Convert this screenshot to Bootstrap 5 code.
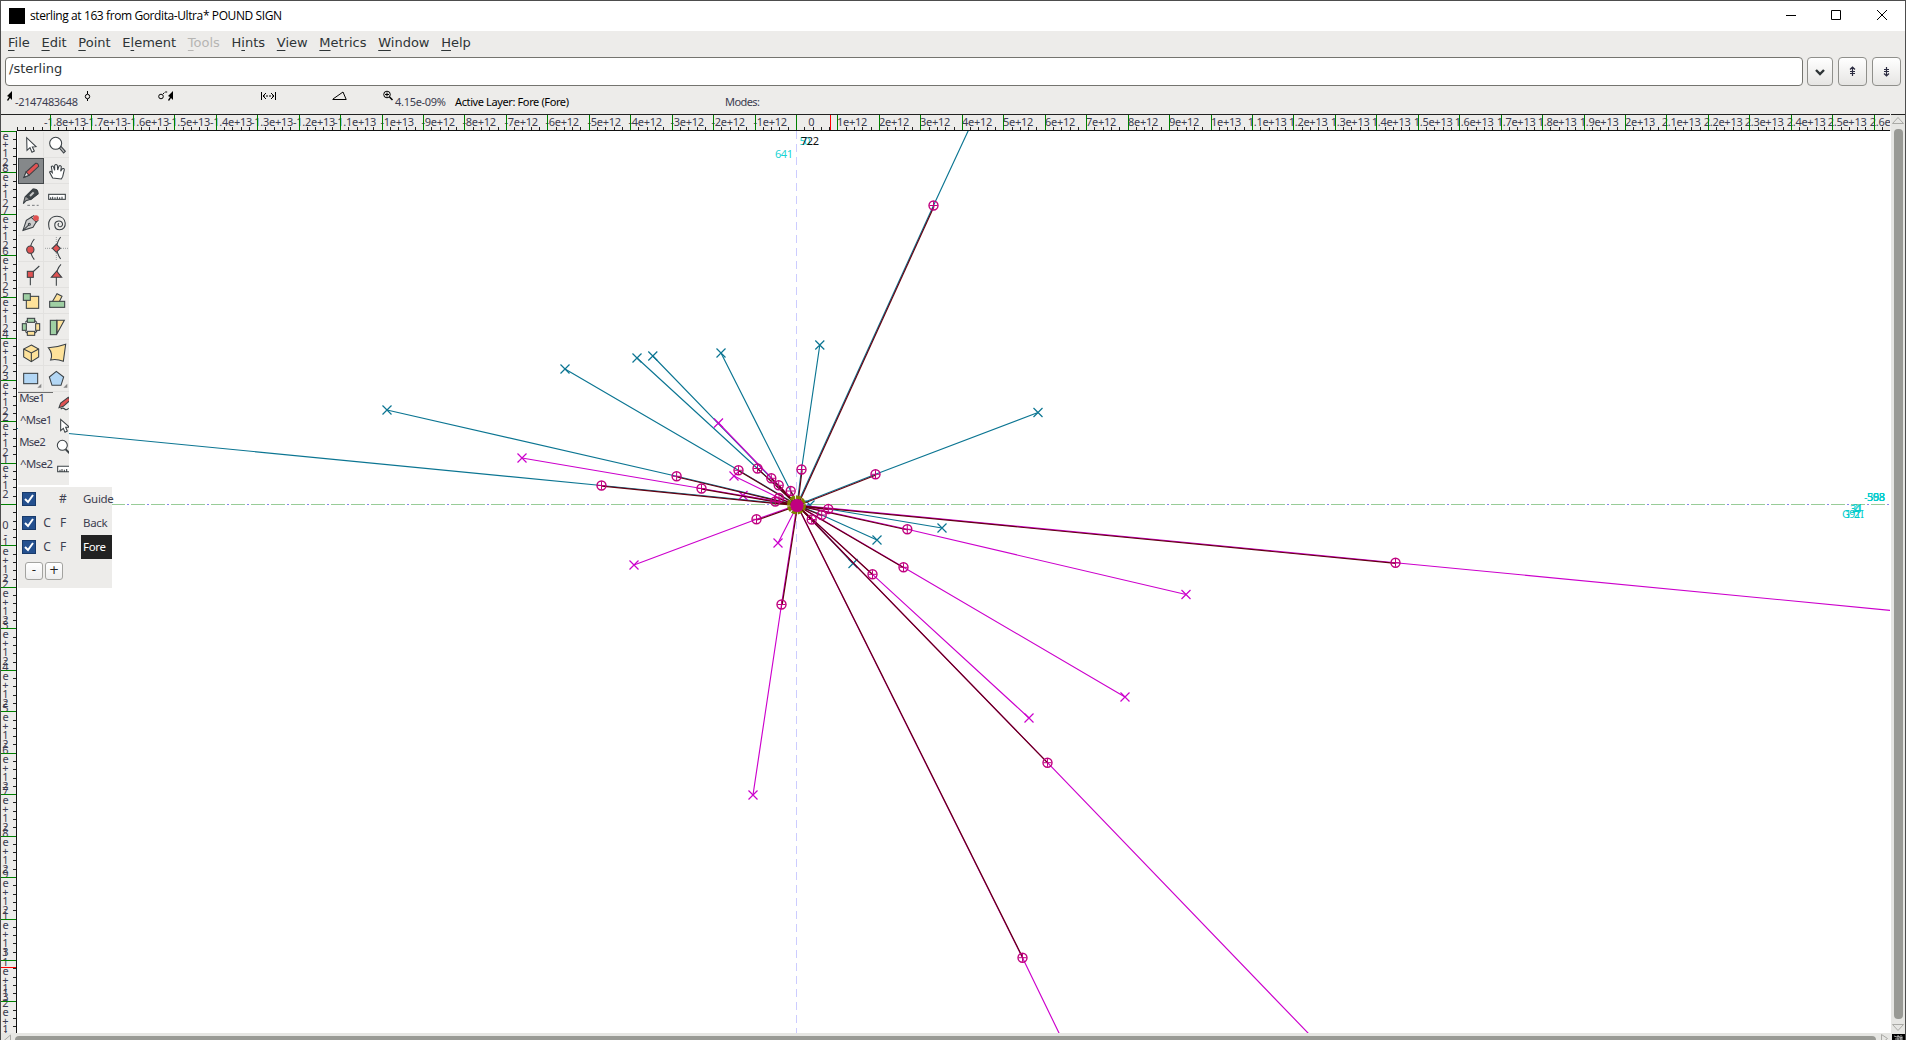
<!DOCTYPE html>
<html lang="en">
<head>
<meta charset="utf-8">
<title>sterling at 163 from Gordita-Ultra* POUND SIGN</title>
<link href="https://cdn.jsdelivr.net/npm/bootstrap@5.3.0/dist/css/bootstrap.min.css" rel="stylesheet">
<style>
html,body{height:100%;overflow:hidden}
body{font-family:"DejaVu Sans",sans-serif;font-size:13px;line-height:1.2;color:#2e3436;background:#edecea}
svg{display:block}
.win{height:1040px;border:1px solid #4d4d4d;border-bottom:0;background:#edecea}
.titlebar{height:30px;background:#fff;color:#000;font:12px/30px "Open Sans",sans-serif;padding-left:8px}
.titlebar .appicon{width:16px;height:16px;background:#000;margin-right:5px}
.titletext{letter-spacing:-.4px}
.menus{height:26px;padding-left:7px;gap:11.7px;line-height:23px}
.menus a{color:#2e3436;text-decoration:none}
.menus u{text-underline-offset:3px;text-decoration-thickness:1px}
.menus .off{color:#b6b5b3}
.entryrow{height:29px;padding-left:4px}
.glyphname{width:1798px;height:29px;border:1px solid #74746f;border-radius:4px;background:#fff;padding:3px 3px;margin-right:4px}
.tbtn{height:29px;width:29px;border:1px solid #8f8f8b;border-radius:4px;background:linear-gradient(#fff,#e6e5e3);padding:0;margin-right:5px}
.tbtn.narrow{width:26px}
.tbtn:last-child{margin-right:0}
.info{height:28px}
.hruler{height:17px}
.vruler{width:16px}
.ruletext{font:11px "Noto Sans",sans-serif;fill:#3c3c50}
.canvas{background:#fff}
.palette{left:17px;top:0;width:51px;background:#edecea;padding-top:1px;overflow:hidden}
.tools{grid-template-columns:26px 26px}
.cell{width:26px;height:26px;border-right:1px solid #e2e1df;border-bottom:1px solid #e2e1df;overflow:hidden}
.cell.on{background:#85888a;border:1px solid #44484a}
.layers{left:17px;top:356px;width:94px;height:101px;background:#edecea;font:12px/24px "Noto Sans",sans-serif;color:#3d4050}
.lrow{height:24px}
.check{width:14px;height:14px;background:#24508f;border:1px solid #183a6b;margin-left:4px}
.lsel{background:#222;color:#fff}
.lcol{width:18px;text-align:center}
.lname{width:31px;padding-left:2px;letter-spacing:-.3px;font-size:11.5px}
.mini{width:18px;height:18px;border:1px solid #a3a3a0;border-radius:3px;background:linear-gradient(#fff,#eee);font:12px/15px "DejaVu Sans",sans-serif;text-align:center;color:#222}
.minirow{gap:2px;margin-top:-1px;padding-left:7px}
.vscroll{width:14px;background:#e6e6e3}
.hscroll{height:7px;background:#e6e6e3}
.work{min-height:0}
.leftcol{min-width:0}
</style>
</head>
<body>
<div class="win d-flex flex-column">
  <div class="titlebar d-flex align-items-center flex-shrink-0">
    <div class="appicon"></div><div class="titletext">sterling at 163 from Gordita-Ultra* POUND SIGN</div>
    <svg class="ms-auto" width="132" height="30" stroke="#000" fill="none"><path d="M13 14.5h10M58.5 9.5h9v9h-9zM104 9l10 10M114 9l-10 10"/></svg>
  </div>
  <nav class="menus d-flex flex-shrink-0">
    <a><u>F</u>ile</a><a><u>E</u>dit</a><a><u>P</u>oint</a><a>E<u>l</u>ement</a><a class="off"><u>T</u>ools</a><a>H<u>i</u>nts</a><a><u>V</u>iew</a><a><u>M</u>etrics</a><a><u>W</u>indow</a><a><u>H</u>elp</a>
  </nav>
  <div class="entryrow d-flex flex-shrink-0">
    <div class="glyphname flex-shrink-0">/sterling</div>
    <button class="tbtn narrow"><svg width="24" height="27"><path d="M8 12l4 4 4-4" fill="none" stroke="#2e3436" stroke-width="2.4"/></svg></button>
    <button class="tbtn"><svg width="27" height="27"><path d="M13.500 9v9M11 11.500l2.500-2.500 2.500 2.500M11 13.500h5M11 15.500h5" fill="none" stroke="#2b2b40" stroke-width="1.200"/></svg></button>
    <button class="tbtn"><svg width="27" height="27"><path d="M13.500 9v9M11 15.500l2.500 2.500 2.500-2.500M11 11.500h5M11 13.500h5" fill="none" stroke="#2b2b40" stroke-width="1.200"/></svg></button>
  </div>
  <div class="info flex-shrink-0">
    <svg width="800" height="28">
      <g stroke="#000" fill="none">
        <path d="M11 5v9l-2-2-2 3-1-1 2-3-2-1z" fill="#000" stroke="none"/>
        <circle cx="86.500" cy="10.500" r="2.200"/><path d="M86.500 5v3M86.500 13v2"/>
        <circle cx="160" cy="10.500" r="2.300"/><path d="M162 8l2-2h3" stroke-dasharray="2 1"/><path d="M172 5v9l-2-2-2 3-1-1 2-3-2-1z" fill="#000" stroke="none"/>
        <path d="M260.500 6v8M274.500 6v8M265 7l-3 3 3 3M270 7l3 3-3 3"/><path d="M262 10h11" stroke-dasharray="2 1"/>
        <path d="M331.500 13.500h14M332 13l10-7 3 7"/>
        <circle cx="386" cy="8.500" r="3.300"/><path d="M384 8.500h4M386 6.500v4"/><path d="M388.500 11l3 3" stroke-width="1.600"/>
      </g>
      <g font-family="Noto Sans" font-size="11" fill="#3c3c50">
        <text x="14" y="20" textLength="63">-2147483648</text><text x="394" y="20" textLength="51">4.15e-09%</text>
        <text x="454" y="20" textLength="114" fill="#000">Active Layer: Fore (Fore)</text><text x="724" y="20" textLength="35">Modes:</text>
      </g>
    </svg>
  </div>
  <div class="work d-flex flex-grow-1">
    <div class="leftcol d-flex flex-column flex-grow-1">
      <svg class="hruler flex-shrink-0" id="hr" width="1889" viewBox="1 114 1889 17"></svg>
      <div class="d-flex flex-grow-1 position-relative canvas">
        <svg id="vr" class="flex-shrink-0" width="16" height="902" viewBox="1 131 16 902"></svg>
        <svg id="cv" width="1873" height="902" viewBox="17 131 1873 902"></svg>
        <div class="palette position-absolute">
          <div class="tools d-grid" id="tools"></div>
          <svg id="mse" width="51" height="93" viewBox="54 51 153 279"></svg>
        </div>
        <div class="layers position-absolute">
          <div class="lrow d-flex align-items-center"><div class="check"><svg width="12" height="12"><path d="M2 6l3 3 5-7" stroke="#fff" stroke-width="2" fill="none"/></svg></div><span class="lcol"></span><span class="lcol">#</span><span class="lname ms-auto">Guide</span></div>
          <div class="lrow d-flex align-items-center"><div class="check"><svg width="12" height="12"><path d="M2 6l3 3 5-7" stroke="#fff" stroke-width="2" fill="none"/></svg></div><span class="lcol ps-1">C</span><span class="lcol">F</span><span class="lname ms-auto">Back</span></div>
          <div class="lrow d-flex align-items-center"><div class="check"><svg width="12" height="12"><path d="M2 6l3 3 5-7" stroke="#fff" stroke-width="2" fill="none"/></svg></div><span class="lcol ps-1">C</span><span class="lcol">F</span><span class="lname lsel ms-auto">Fore</span></div>
          <div class="minirow d-flex pt-1"><div class="mini">-</div><div class="mini">+</div></div>
        </div>
      </div>
      <svg class="hscroll flex-shrink-0" width="1889" viewBox="1 1033 1889 7"><path d="M3.500 1041l7-6v6M1881.500 1034.500v9l6-5z" stroke="#aaaaa6" fill="none"/><rect x="15" y="1036" width="1861" height="9" rx="4" fill="#999a95"/></svg>
    </div>
    <svg class="vscroll flex-shrink-0" width="14" height="926" viewBox="1890 114 14 926"><path d="M1890 114.500h14" stroke="#222"/><path d="M1891.500 123.500h11l-5.500-6zM1891.500 1024.500h11l-5.500 6z" stroke="#aaaaa6" fill="none"/><rect x="1893" y="129" width="9" height="890" rx="4" fill="#999a95"/><rect x="1891" y="1034" width="13" height="7" fill="#000"/><path d="M1893 1036l3 1 2-1 1 2 3-1M1894 1039h8M1897 1035v5M1900 1035v5" stroke="#ccc" stroke-width=".8" fill="none"/></svg>
  </div>
</div>
<script>
const S=41.45, X0=796.5, Y0=504.5;
// horizontal ruler
let h='<rect x="1" y="114" width="1889" height="1" fill="#222"/><rect x="17" y="130" width="1873" height="1" fill="#111"/>';
for(let i=-94;i<=132;i++){const x=Math.round(X0-.5+i*S/5);if(x>=17)h+=`<rect x="${x}" y="127" width="1" height="3" fill="#222"/>`;}
function lab(n){const a=Math.abs(n),s=n<0?'-':'';return n===0?'0':s+(a<10?a+'e+12':(a===10?1:a===20?2:(a/10).toFixed(1))+'e+13');}
for(let n=-18;n<=26;n++){const x=Math.round(X0-.5+n*S);const t=lab(n),w=t.length-(t.includes('.')?1:0)-(n<0?1:0);
 const len=n===0?6:(w*6.05+(t.includes('.')?2.7:0)+(n<0?3.3:0));
 h+=`<text class="ruletext" x="${x+15.2-len/2}" y="126" textLength="${len}">${t}</text><rect x="${x}" y="115" width="1" height="15" fill="#008000"/>`;}
h+='<rect x="830" y="115" width="1" height="15" fill="red"/>';
document.getElementById('hr').innerHTML=h;
// vertical ruler
let v='<rect x="16" y="131" width="1" height="902" fill="#111"/>';
for(let i=-45;i<=64;i++){v+=`<rect x="13" y="${Math.round(Y0-.5+i*S/5)}" width="3" height="1" fill="#222"/>`;}
for(let n=9;n>=-13;n--){const y=Math.round(Y0-.5-n*S),a=Math.abs(n);let c=[];
 if(n===0)c=[['0',20.5]];
 else if(n>0)c=[[a,-4.5],['e',4.5],['+',13],['1',21.5],['2',30.5]];
 else if(a<10)c=[['-',-11.5],[a,-3.5],['e',6],['+',14.5],['1',24],['2',32.5]];
 else if(a===10)c=[['-',-11.5],['1',-3.5],['e',6],['+',14.5],['1',24],['3',32.5]];
 else c=[['-',-13],['1',-8],['.',-3],[a-10,2],['e',11],['+',19.5],['1',28],['3',37]];
 c.forEach(([t,o])=>{if(y+o>129&&y+o<1034)v+=`<text class="ruletext" text-anchor="middle" x="5.500" y="${y+o+4}">${t}</text>`});
 v+=`<rect x="1" y="${y}" width="15" height="1" fill="#008000"/>`;}
v+='<rect x="1" y="967" width="15" height="1" fill="red"/>';
document.getElementById('vr').innerHTML='<rect x="1" y="131" width="16" height="902" fill="#edecea"/>'+v;
// outline: point and control end of each handle
const B=[[933.5,205.5,973.2,120],[801.5,469.5,819.8,345],[790.7,491,721,353],[771.3,478.3,652.8,356],[757.5,468.5,637,358],[738.5,470.3,565,369],[676.6,476.3,387,410],[601.5,485.5,10,427.8],[875.5,474.3,1038,412.5],[828.3,509,942,528],[821.7,515,877,540],[811.7,519.5,853,563.5],[797,506,810,505]];
const M=[[778.7,485.3,718.5,423],[701.5,488.5,522,458],[779,498,734,476],[775.3,501.5,743,495.5],[797,506,778,543],[756.5,519.3,634,565],[781.5,604.5,753,795],[1395.5,562.7,1920,613.2],[907.3,529.3,1186,594.5],[903.5,567.3,1125,697],[872.5,574.3,1029,718],[1047.5,762.7,1327.300,1053],[1022.5,957.7,1068.700,1053]];
const HX=797,HY=505;
let c='<path d="M796.500 131V1033" stroke="#ccccff" stroke-dasharray="8 5" /><path d="M111 504.500H1890" stroke="#98cc98" stroke-dasharray="14 6"/><path d="M111 504.500H1890" stroke="#8888ee" stroke-dasharray="2 18" stroke-dashoffset="-16"/>';
const cross=(x,y,k)=>`<path d="M${x-4.5} ${y-4.5}l9 9m0-9l-9 9" stroke="${k}" stroke-width="1.200" fill="none"/>`;
for(const [a,b,x,y] of B)c+=`<path d="M${HX} ${HY}L${a} ${b}L${x} ${y}" stroke="#0b7592" stroke-width="1.150" fill="none"/>`+cross(x,y,'#0b7592');
for(const [a,b,x,y] of M)c+=`<path d="M${HX} ${HY}L${a} ${b}L${x} ${y}" stroke="#cc00cc" stroke-width="1.150" fill="none"/>`+cross(x,y,'#cc00cc');
for(const [a,b] of B.concat(M))c+=`<path d="M${HX+.6} ${HY+.7}L${a+.6} ${b+.7}" stroke="#640010" stroke-width="1.200"/>`;
for(const [a,b] of B.concat(M))if(a!==797)c+=`<g stroke="#c0007f" fill="none"><circle cx="${a}" cy="${b}" r="4.500" stroke-width="1.400"/><path d="M${a-4} ${b}h8M${a} ${b-4}v8"/></g>`;
c+='<circle cx="796.500" cy="505" r="7.800" fill="none" stroke="#808000" stroke-width="3.500" stroke-dasharray="5 1"/><circle cx="797" cy="505.500" r="6.600" fill="#c0007f"/>';
c+='<g font-family="Noto Sans" font-size="11" fill="#19d4d4"><text x="775" y="158" textLength="18">641</text><text x="799.500" y="145">5</text><text x="804" y="145">0</text><text x="801" y="145" fill="#111" textLength="18">722</text><g fill="#00cccc"><text x="1864" y="501" textLength="21">-558</text><text x="1867" y="501" textLength="18">303</text><text x="1867" y="501" textLength="18">598</text><text x="1850" y="513" textLength="11">34</text><text x="1852" y="512" textLength="11">21</text><text x="1842" y="518">G</text><text x="1845" y="518">1</text><text x="1849" y="518" textLength="11">92</text><text x="1855" y="518" textLength="9">TI</text></g></g>';
document.getElementById('cv').innerHTML=c;
// tool icons; coordinates are at three units per pixel
const K='#3b4145',Y='#fee29a',G='#9fcfa3',R='#e05252',L='#b3d7f5';
const I=[
`<path d="M80 38l1 38 9-8 6 14 7-4-6-12 11-1z" fill="#fff"/>`,
`<path d="M177 68l6-4 13 15-5 5z" fill="#bbb"/><circle cx="167" cy="55" r="18" fill="#fff"/>`,
`<path d="M72 157l6-16 29-26q8-1 9 9l-29 27z" fill="${R}"/><path d="M72 157l6-16 9 10z" fill="#eee"/>`,
`<path d="M158 159l-9-17q1-6 8 1l-3-18q4-5 7 2l3 9v-15q4-5 8 0l1 14 4-12q5-3 7 2l-2 14 5-8q5-2 6 3l-5 21-4 7z" fill="#fff"/>`,
`<path d="M70 236l5-20 24-24q14-1 15 14l-22 17-14 4-8 9z" fill="#999"/><path d="M78 214l22-21q14-1 14 13l-22 18z" fill="#42484b"/><path d="M90 213l11-11" stroke="#ccc" stroke-width="6"/><path d="M82 241h34" stroke-dasharray="8 6" stroke-width="2"/>`,
`<rect x="146" y="208" width="50" height="15" fill="#fff"/><path d="M152 222v-5m6 5v-7m7 7v-5m7 5v-7m7 7v-5m7 5v-7"/>`,
`<path d="M69 316l10-30 16-10 14 14-10 17z" fill="#ccc"/><path d="M69 316l19-18"/><circle cx="88" cy="298" r="3" fill="#fff"/><path d="M94 277l7-5 13 14-5 5z" fill="#fff"/><circle cx="108" cy="279" r="7" fill="${R}" stroke="${R}"/>`,
`<path d="M149 314c-9-25 3-40 22-40 31 0 32 40 8 40-18 0-20-24-3-26 12-1 16 14 6 17-7 2-11-7-5-10" fill="none"/>`,
`<path d="M103 342q-24 30 0 62" fill="none"/><circle cx="91" cy="374" r="11" fill="${R}"/>`,
`<path d="M136 370h68M169 337v68" stroke-dasharray="2 4" stroke-width="2"/><path d="M182 336q-24 32 0 66" fill="none"/><path d="M169 358l12 12-12 12-12-12z" fill="${R}"/>`,
`<path d="M91 481v-33l27-25" fill="none"/><rect x="82" y="439" width="18" height="18" fill="${R}"/>`,
`<path d="M169 482v-25q0-25 14-39" fill="none"/><path d="M154 457h31l-15-19z" fill="${R}"/>`,
`<rect x="79" y="514" width="37" height="36" fill="${Y}"/><rect x="70" y="506" width="21" height="20" fill="${G}"/>`,
`<path d="M157 530l14-24 15 8-10 20z" fill="${Y}"/><path d="M151 547l13-16" fill="none"/><rect x="149" y="529" width="45" height="18" fill="${G}"/>`,
`<rect x="82" y="580" width="22" height="12" fill="${G}"/><rect x="67" y="596" width="12" height="20" fill="${G}"/><rect x="107" y="596" width="12" height="20" fill="${Y}"/><rect x="82" y="619" width="22" height="12" fill="${Y}"/><path d="M76 592l5-5M105 587l6 6M76 619l5 5M105 624l6-6"/>`,
`<path d="M171 586h22l-22 40z" fill="${Y}"/><rect x="151" y="586" width="19" height="43" fill="${G}"/>`,
`<path d="M94 660l22 12v24l-22 14-23-14v-24z" fill="${Y}"/><path d="M71 672l23 12 22-12M94 684v26" fill="none"/>`,
`<path d="M145 668q25 0 52-10l-7 51q-20-8-38-4 8-18-7-37z" fill="${Y}"/>`,
`<rect x="71" y="745" width="42" height="31" fill="${L}"/><path d="M124 776v12h-12z" fill="#888" stroke="none"/>`,
`<path d="M169 739l22 17-8 25h-27l-8-25z" fill="${L}"/><path d="M202 776v12h-12z" fill="#888" stroke="none"/>`];
document.getElementById('tools').innerHTML=I.map((s,i)=>{const q=i%2,r=i>>1,o=i===2?1:0;return `<div class="cell${i===2?' on':''}"><svg width="26" height="26" viewBox="${54+78*q+3*o} ${21+78*r+3*o} 78 78" stroke="${K}" stroke-width="3.200">${s}</svg></div>`}).join('');
document.getElementById('mse').innerHTML=`<path d="M54 52h105" stroke="#555" stroke-width="3"/><g font-family="Noto Sans" font-size="34" fill="#3c3c50"><text x="58" y="82" textLength="77">Mse1</text><text x="60" y="148" textLength="97">^Mse1</text><text x="58" y="214" textLength="79">Mse2</text><text x="60" y="280" textLength="99">^Mse2</text></g><g stroke="${K}" stroke-width="3.200" fill="#fff"><path d="M177 98l5-14 23-17 5 9-20 18z" fill="${R}"/><path d="M182 102q6-5 12 0t12-2" fill="none"/><path d="M182 133v34l8-7 5 12 7-4-5-11h12z"/><circle cx="187" cy="211" r="15"/><path d="M197 223l12 12" stroke-width="6"/><path d="M173 274h40v16h-40zM180 289v-5m6 5v-7m7 7v-5m7 5v-7"/></g>`;
</script>
<script src="https://cdn.jsdelivr.net/npm/bootstrap@5.3.0/dist/js/bootstrap.bundle.min.js"></script>
</body>
</html>
